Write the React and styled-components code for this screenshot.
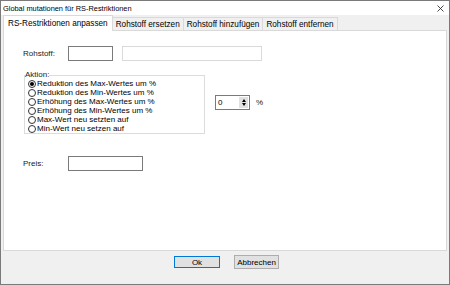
import React, { useState } from 'react';
import styled, { createGlobalStyle } from 'styled-components';

const GlobalStyle = createGlobalStyle`
  html, body {
    margin: 0;
    padding: 0;
    overflow: hidden;
    background: #f0f0f0;
  }
  * {
    box-sizing: border-box;
  }
`;

const Window = styled.div`
  width: 450px;
  height: 285px;
  border: 1px solid #7a7a7a;
  background: #f0f0f0;
  display: flex;
  flex-direction: column;
  font-family: "Liberation Sans", Arial, sans-serif;
  color: #000;
`;

const TitleBar = styled.div`
  height: 14px;
  background: #fff;
  display: flex;
  align-items: center;
  justify-content: space-between;
  padding: 0 5px 0 2px;
  font-size: 7.4px;
`;

const CloseIcon = styled.svg`
  width: 7px;
  height: 7px;
  margin-top: 1px;
`;

const Body = styled.div`
  flex: 1;
  display: flex;
  flex-direction: column;
  padding: 0 2px;
`;

const TabStrip = styled.div`
  height: 15px;
  display: flex;
  align-items: flex-end;
  position: relative;
  z-index: 1;
`;

const Tab = styled.div`
  height: ${(p) => (p.$active ? '16px' : '13px')};
  margin-bottom: ${(p) => (p.$active ? '-1px' : '0')};
  padding: ${(p) => (p.$active ? '0 4px 1px' : '0 3px')};
  background: ${(p) => (p.$active ? '#fff' : '#f0f0f0')};
  border: 1px solid #d9d9d9;
  border-bottom: none;
  margin-left: ${(p) => (p.$first ? '0' : '-1px')};
  font-size: 8.2px;
  display: flex;
  align-items: center;
  white-space: nowrap;
`;

const Panel = styled.div`
  height: 221px;
  background: #fff;
  border: 1px solid #d9d9d9;
  padding: 15px 0 0 19px;
  display: flex;
  flex-direction: column;
  font-size: 8px;
`;

const FieldRow = styled.div`
  display: flex;
  align-items: center;
  height: 15px;
  margin-top: ${(p) => p.$gap || 0}px;
`;

const Label = styled.span`
  width: 45px;
  color: #1a1a1a;
`;

const TextBox = styled.div`
  width: ${(p) => p.$w}px;
  height: 15px;
  border: 1px solid ${(p) => (p.$light ? '#dadada' : '#7a7a7a')};
  background: #fff;
  margin-left: ${(p) => p.$ml || 0}px;
`;

const ActionRow = styled.div`
  display: flex;
  align-items: center;
  margin-top: 10px;
  padding-left: 1px;
`;

const GroupBox = styled.fieldset`
  width: 181px;
  margin: 0;
  padding: 0 0 0 3px;
  border: 1px solid #dcdcdc;
  min-width: 0;
`;

const Legend = styled.legend`
  padding: 0;
  margin-left: -3px;
  font-size: 8px;
  line-height: 8px;
  color: #1a1a1a;
`;

const OptionList = styled.div`
  display: flex;
  flex-direction: column;
`;

const Option = styled.label`
  display: flex;
  align-items: center;
  height: 9px;
  font-size: 8px;
  white-space: nowrap;
  cursor: default;
`;

const RadioDot = styled.span`
  width: 8px;
  height: 8px;
  border-radius: 50%;
  border: 1px solid #333;
  background: #fff;
  margin-right: 1px;
  display: flex;
  align-items: center;
  justify-content: center;
  &::after {
    content: '';
    width: 4px;
    height: 4px;
    border-radius: 50%;
    background: ${(p) => (p.$checked ? '#000' : 'transparent')};
  }
`;

const Spinner = styled.div`
  width: 35px;
  height: 15px;
  margin-left: 10px;
  border: 1px solid #7a7a7a;
  background: #fff;
  display: flex;
  align-items: stretch;
  font-size: 8px;
`;

const SpinValue = styled.span`
  flex: 1;
  padding-left: 2px;
  display: flex;
  align-items: center;
`;

const SpinButtons = styled.div`
  width: 9px;
  margin: 1px 1px 1px 0;
  background: #e1e1e1;
  display: flex;
  flex-direction: column;
  align-items: center;
  justify-content: center;
  gap: 1px;
`;

const Arrow = styled.span`
  width: 0;
  height: 0;
  border-left: 2.5px solid transparent;
  border-right: 2.5px solid transparent;
  ${(p) => (p.$up ? 'border-bottom: 3px solid #000;' : 'border-top: 3px solid #000;')}
`;

const Percent = styled.span`
  margin-left: 6px;
  font-size: 8px;
  color: #1a1a1a;
`;

const Footer = styled.div`
  flex: 1;
  display: flex;
  justify-content: center;
  align-items: flex-start;
  gap: 14px;
  padding-top: 4px;
  padding-left: 3px;
`;

const Button = styled.button`
  width: ${(p) => (p.$default ? '46px' : '45px')};
  height: ${(p) => (p.$default ? '12px' : '14px')};
  margin-top: ${(p) => (p.$default ? '1px' : '0')};
  padding: 0;
  background: #e1e1e1;
  border: 1px solid ${(p) => (p.$default ? '#0078d7' : '#adadad')};
  font-family: "Liberation Sans", Arial, sans-serif;
  font-size: 8px;
  color: #000;
  display: flex;
  align-items: center;
  justify-content: center;
`;

const tabs = ['RS-Restriktionen anpassen', 'Rohstoff ersetzen', 'Rohstoff hinzufügen', 'Rohstoff entfernen'];

const options = [
  'Reduktion des Max-Wertes um %',
  'Reduktion des Min-Wertes um %',
  'Erhöhung des Max-Wertes um %',
  'Erhöhung des Min-Wertes um %',
  'Max-Wert neu setzten auf',
  'Min-Wert neu setzen auf',
];

const App = () => {
  const [selected, setSelected] = useState(0);

  return (
    <>
      <GlobalStyle />
      <Window>
        <TitleBar>
          <span>Global mutationen für RS-Restriktionen</span>
          <CloseIcon viewBox="0 0 7 7">
            <path d="M0.5 0.5 L6.5 6.5 M6.5 0.5 L0.5 6.5" stroke="#333" strokeWidth="0.9" />
          </CloseIcon>
        </TitleBar>
        <Body>
          <TabStrip>
            {tabs.map((t, i) => (
              <Tab key={t} $active={i === 0} $first={i === 0}>
                {t}
              </Tab>
            ))}
          </TabStrip>
          <Panel>
            <FieldRow>
              <Label>Rohstoff:</Label>
              <TextBox $w={45} />
              <TextBox $w={140} $ml={9} $light />
            </FieldRow>
            <ActionRow>
              <GroupBox>
                <Legend>Aktion:</Legend>
                <OptionList>
                  {options.map((o, i) => (
                    <Option key={o} onClick={() => setSelected(i)}>
                      <RadioDot $checked={selected === i} />
                      {o}
                    </Option>
                  ))}
                </OptionList>
              </GroupBox>
              <Spinner>
                <SpinValue>0</SpinValue>
                <SpinButtons>
                  <Arrow $up />
                  <Arrow />
                </SpinButtons>
              </Spinner>
              <Percent>%</Percent>
            </ActionRow>
            <FieldRow $gap={22}>
              <Label>Preis:</Label>
              <TextBox $w={75} />
            </FieldRow>
          </Panel>
          <Footer>
            <Button $default>Ok</Button>
            <Button>Abbrechen</Button>
          </Footer>
        </Body>
      </Window>
    </>
  );
};

export default App;
